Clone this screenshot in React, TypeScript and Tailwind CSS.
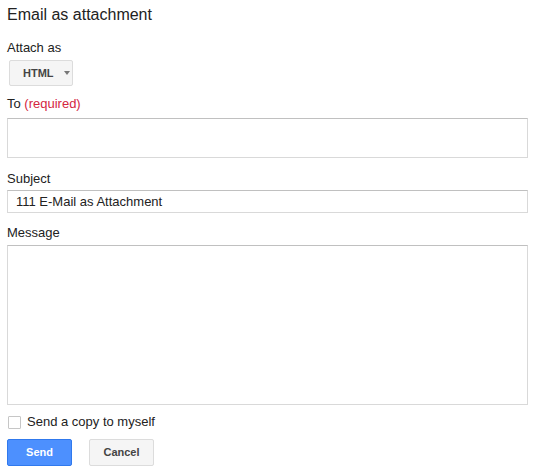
import React from 'react';

export default function App() {
  return (
    <div className="w-[539px] h-[473px] bg-white px-[7px] pt-[5px] text-[#222] font-['Liberation_Sans',Arial,sans-serif]">
      <h1 className="text-[16px] leading-[20px]">Email as attachment</h1>

      <div className="mt-[15px] text-[13px] leading-[16px]">Attach as</div>
      <button className="mt-[4px] ml-[2px] flex h-[26px] w-[64px] items-center rounded-[2px] border border-[#dcdcdc] bg-[#f5f5f5] pl-[13px] text-[11px] font-bold text-[#444]">
        HTML
        <span className="ml-[10px] h-0 w-0 border-x-[3px] border-t-[4px] border-x-transparent border-t-[#777]" />
      </button>

      <div className="mt-[10px] text-[13px] leading-[16px]">
        To <span className="text-[#d4263f]">(required)</span>
      </div>
      <div className="mt-[6px] h-[40px] w-[521px] border border-[#d9d9d9] border-t-[#c0c0c0]" />

      <div className="mt-[13px] text-[13px] leading-[16px]">Subject</div>
      <div className="mt-[3px] flex h-[23px] w-[521px] items-center border border-[#d9d9d9] border-t-[#c0c0c0] pl-[8px] text-[13px]">
        111 E-Mail as Attachment
      </div>

      <div className="mt-[12px] text-[13px] leading-[16px]">Message</div>
      <div className="mt-[4px] h-[160px] w-[521px] border border-[#d9d9d9] border-t-[#c0c0c0]" />

      <label className="mt-[9px] ml-[1px] flex items-center gap-[6px] text-[13px] leading-[16px]">
        <span className="h-[13px] w-[13px] rounded-[1px] border border-[#c6c6c6] bg-white" />
        Send a copy to myself
      </label>

      <div className="mt-[9px] flex gap-[17px]">
        <button className="h-[27px] w-[65px] rounded-[2px] border border-[#3079ed] bg-[#4d90fe] text-[11px] font-bold text-white">
          Send
        </button>
        <button className="h-[27px] w-[65px] rounded-[2px] border border-[#dcdcdc] bg-[#f5f5f5] text-[11px] font-bold text-[#444]">
          Cancel
        </button>
      </div>
    </div>
  );
}
